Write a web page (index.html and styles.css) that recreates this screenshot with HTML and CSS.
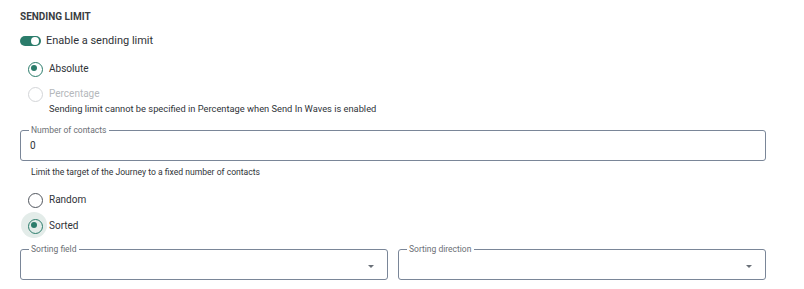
FILE: index.html
```html
<!DOCTYPE html>
<html lang="en">
<head>
    <meta charset="UTF-8">
    <title>Sending limit</title>
    <link rel="stylesheet" href="styles.css">
</head>
<body>
    <div class="panel">
        <h2 class="section-title">SENDING LIMIT</h2>

        <label class="toggle-row">
            <span class="toggle on"><span class="toggle-knob"></span></span>
            <span class="toggle-label">Enable a sending limit</span>
        </label>

        <div class="radio-group">
            <label class="radio-row first">
                <span class="radio checked"></span>
                <span class="radio-label">Absolute</span>
            </label>
            <label class="radio-row disabled">
                <span class="radio"></span>
                <span class="radio-label">Percentage</span>
            </label>
            <p class="radio-hint">Sending limit cannot be specified in Percentage when Send In Waves is enabled</p>
        </div>

        <fieldset class="field">
            <legend class="field-label">Number of contacts</legend>
            <div class="field-value">0</div>
        </fieldset>
        <p class="field-hint">Limit the target of the Journey to a fixed number of contacts</p>

        <div class="radio-group order">
            <label class="radio-row tall">
                <span class="radio"></span>
                <span class="radio-label">Random</span>
            </label>
            <label class="radio-row tall focused">
                <span class="radio checked"></span>
                <span class="radio-label">Sorted</span>
            </label>
        </div>

        <div class="select-grid">
            <fieldset class="field select">
                <legend class="field-label">Sorting field</legend>
                <div class="field-value"></div>
                <span class="caret"></span>
            </fieldset>
            <fieldset class="field select">
                <legend class="field-label">Sorting direction</legend>
                <div class="field-value"></div>
                <span class="caret"></span>
            </fieldset>
        </div>
    </div>
</body>
</html>
```

FILE: styles.css
```css
:root {
    --color-teal: #2b7c6b;
    --color-text: #2f3338;
    --color-muted: #6b6f75;
    --color-disabled: #b5b8bc;
    --color-border: #7a8698;
    --color-halo: #e3ece9;
}

* {
    box-sizing: border-box;
}

body {
    margin: 0;
    background: #ffffff;
    color: var(--color-text);
    font-family: Roboto, 'Liberation Sans', sans-serif;
}

.panel {
    padding: 10px 38px 0 20px;
}

.section-title {
    margin: 0;
    font-size: 10px;
    line-height: 13px;
    font-weight: 700;
    color: #3a3d42;
}

/* toggle */
.toggle-row {
    display: flex;
    align-items: center;
    gap: 5px;
    height: 19px;
    margin-top: 8px;
}

.toggle {
    width: 21px;
    height: 10px;
    border-radius: 5px;
    background: var(--color-teal);
    position: relative;
}

.toggle-knob {
    position: absolute;
    top: 1px;
    right: 2px;
    width: 8px;
    height: 8px;
    border-radius: 50%;
    background: #ffffff;
}

.toggle-label {
    font-size: 11px;
    color: var(--color-text);
}

/* radios */
.radio-group {
    padding-left: 1px;
}

.radio-row {
    display: flex;
    align-items: center;
    height: 20px;
    margin-top: 5px;
}

.radio-row.first {
    margin-top: 8px;
}

.radio-row.tall {
    height: 26px;
    margin-top: 0;
}

.radio {
    position: relative;
    width: 26px;
    height: 26px;
    flex: none;
    border-radius: 50%;
}

.radio::before {
    content: "";
    position: absolute;
    left: 6.5px;
    top: 6.5px;
    width: 13px;
    height: 13px;
    border: 1.3px solid #51565e;
    border-radius: 50%;
}

.radio.checked::before {
    border-color: var(--color-teal);
}

.radio.checked::after {
    content: "";
    position: absolute;
    left: 10px;
    top: 10px;
    width: 6px;
    height: 6px;
    border-radius: 50%;
    background: var(--color-teal);
}

.radio-row.focused .radio {
    background: var(--color-halo);
}

.radio-label {
    margin-left: 2px;
    font-size: 10px;
}

.radio-row.disabled .radio::before {
    border-color: #d3d5d8;
}

.radio-row.disabled .radio-label {
    color: var(--color-disabled);
}

.radio-hint {
    margin: 0 0 0 28px;
    font-size: 9.3px;
    line-height: 12px;
}

.radio-group.order {
    margin-top: 8px;
}

/* outlined fields */
.field {
    position: relative;
    margin: 10px 0 0;
    padding: 0 9px;
    border: 1px solid var(--color-border);
    border-radius: 3px;
    min-width: 0;
}

.field-label {
    margin-left: -1px;
    padding: 0 3px 0 2px;
    font-size: 8.5px;
    line-height: 10px;
    color: var(--color-muted);
}

.field-value {
    height: 25px;
    padding-bottom: 4px;
    display: flex;
    align-items: center;
    font-size: 10px;
}

.field-hint {
    margin: 5px 0 0 11px;
    font-size: 8.6px;
    line-height: 12px;
}

.select-grid {
    display: grid;
    grid-template-columns: 1fr 1fr;
    gap: 10px;
    margin-top: 6px;
}

.select-grid .field {
    margin-top: 0;
}

.caret {
    position: absolute;
    right: 13px;
    top: 11px;
    width: 0;
    height: 0;
    border-left: 3.5px solid transparent;
    border-right: 3.5px solid transparent;
    border-top: 3.5px solid #6a7078;
}
```
